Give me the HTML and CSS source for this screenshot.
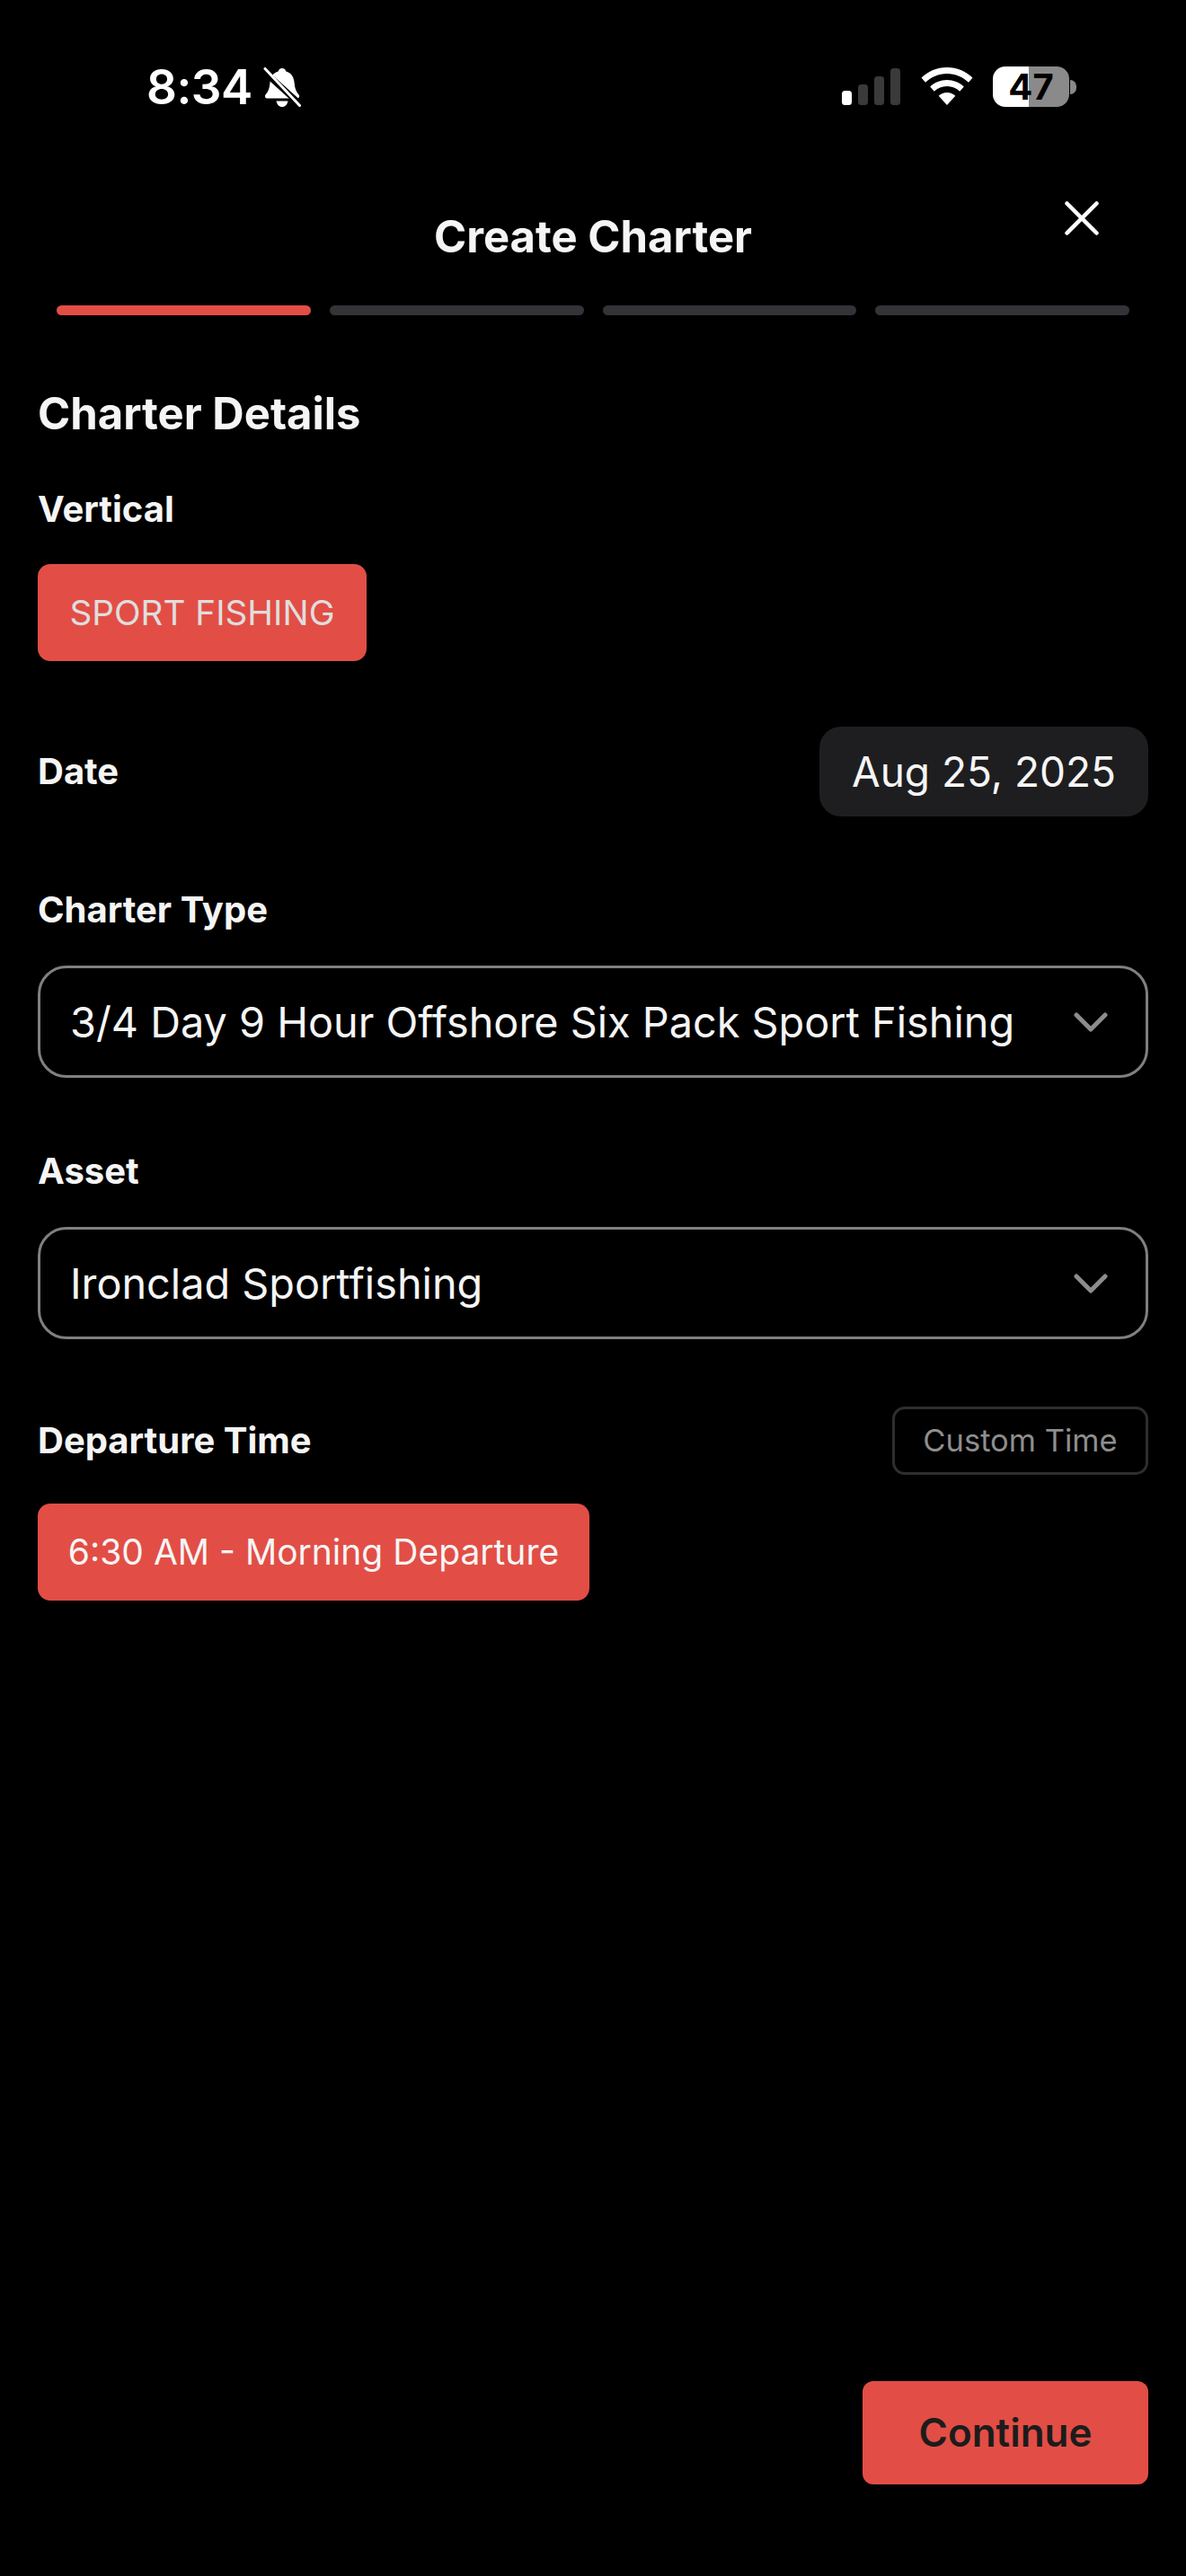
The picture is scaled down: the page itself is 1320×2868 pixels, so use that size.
FILE: index.html
```html
<!DOCTYPE html>
<html lang="en">
<head>
<meta charset="utf-8">
<title>Create Charter</title>
<link rel="stylesheet" href="styles.css">
</head>
<body>
<div class="screen">
  <header class="status">
    <div class="status-left">
      <span class="time">8:34</span>
      <svg class="bell" viewBox="0 0 42 45" aria-hidden="true">
        <path fill="#fff" d="M21 1c2.500 0 4 1.600 4.300 3.500 6 1.600 8.700 6.300 9.300 12.500.5 6 1.800 10 5 13.500 1.200 1.500.5 4-2 4H4.500c-2.500 0-3.200-2.500-2-4 3.200-3.500 4.500-7.500 5-13.500.6-6.200 3.300-10.900 9.200-12.500C17 2.600 18.500 1 21 1z"/>
        <path fill="#fff" d="M14.500 37.500h13c-.6 3.800-3.200 6.500-6.500 6.500s-5.900-2.700-6.500-6.500z"/>
        <path stroke="#000" stroke-width="7" d="M0 4l42 38"/>
        <path stroke="#fff" stroke-width="3" stroke-linecap="round" d="M2 1.500l38.500 41"/>
      </svg>
    </div>
    <div class="status-right">
      <svg class="signal" viewBox="0 0 65 41" aria-hidden="true">
        <rect x="0" y="25" width="11" height="16" rx="3.500" fill="#fff"/>
        <rect x="18" y="18" width="11" height="23" rx="3.500" fill="#3a3a3a"/>
        <rect x="36" y="9" width="11" height="32" rx="3.500" fill="#3a3a3a"/>
        <rect x="54" y="0" width="11" height="41" rx="3.500" fill="#3a3a3a"/>
      </svg>
      <svg class="wifi" viewBox="0 0 58 42" aria-hidden="true">
        <path fill="#fff" d="M29 0c11 0 21 4.300 28.500 11.500L53 16.800C46.800 10.800 38.300 7 29 7S11.200 10.800 5 16.800L.5 11.500C8 4.300 18 0 29 0z"/>
        <path fill="#fff" d="M29 14c7.200 0 13.800 2.800 18.800 7.500l-4.600 5.200C39.500 23.200 34.500 21 29 21s-10.500 2.200-14.200 5.700l-4.600-5.200C15.200 16.800 21.800 14 29 14z"/>
        <path fill="#fff" d="M29 28c3.600 0 6.900 1.400 9.300 3.700L29 42l-9.300-10.300C22.100 29.400 25.400 28 29 28z"/>
      </svg>
      <div class="battery">
        <div class="battery-body"><span class="battery-level">47</span></div>
        <span class="battery-nub"></span>
      </div>
    </div>
  </header>

  <div class="title-row">
    <h1 class="title">Create Charter</h1>
    <svg class="close" viewBox="0 0 38 38" aria-hidden="true">
      <path d="M2.500 2.500l33 33M35.500 2.500l-33 33" stroke="#fff" stroke-width="4.500" stroke-linecap="round"/>
    </svg>
  </div>

  <div class="progress">
    <span class="step step-on"></span>
    <span class="step"></span>
    <span class="step"></span>
    <span class="step"></span>
  </div>

  <main class="form">
    <h2 class="heading">Charter Details</h2>

    <section class="field-vertical">
      <div class="label">Vertical</div>
      <div class="chip chip-vertical">SPORT FISHING</div>
    </section>

    <section class="date-row">
      <div class="label">Date</div>
      <div class="date">Aug 25, 2025</div>
    </section>

    <section class="field-type">
      <div class="label">Charter Type</div>
      <div class="select">
        <span>3/4 Day 9 Hour Offshore Six Pack Sport Fishing</span>
        <svg class="chevron" viewBox="0 0 38 22" aria-hidden="true"><path d="M3 3l16 16L35 3" fill="none" stroke="#8c8c8c" stroke-width="5" stroke-linecap="round" stroke-linejoin="round"/></svg>
      </div>
    </section>

    <section class="field-asset">
      <div class="label">Asset</div>
      <div class="select">
        <span>Ironclad Sportfishing</span>
        <svg class="chevron" viewBox="0 0 38 22" aria-hidden="true"><path d="M3 3l16 16L35 3" fill="none" stroke="#8c8c8c" stroke-width="5" stroke-linecap="round" stroke-linejoin="round"/></svg>
      </div>
    </section>

    <section class="departure">
      <div class="departure-head">
        <div class="label">Departure Time</div>
        <div class="custom">Custom Time</div>
      </div>
      <div class="chip chip-time">6:30 AM - Morning Departure</div>
    </section>
  </main>

  <footer class="footer">
    <div class="continue">Continue</div>
  </footer>
</div>
</body>
</html>
```

FILE: styles.css
```css
* { box-sizing: border-box; }
html, body { margin: 0; padding: 0; background: #000; }
body { font-family: Inter, "Liberation Sans", sans-serif; color: #f5f5f5; }
.screen { width: 1320px; height: 2868px; display: flex; flex-direction: column; background: #000; }

.status { height: 200px; padding: 74px 122px 0 163px; display: flex; justify-content: space-between; align-items: flex-start; }
.status-left { display: flex; align-items: flex-start; gap: 12px; }
.time { font-size: 53px; line-height: 46px; font-weight: 600; color: #fff; letter-spacing: -0.5px; }
.bell { width: 42px; height: 45px; display: block; margin-top: 1px; }
.status-right { display: flex; align-items: flex-start; }
.signal { width: 65px; height: 41px; margin-top: 2px; display: block; }
.wifi { width: 58px; height: 42px; margin-left: 23px; margin-top: 1px; display: block; }
.battery { margin-left: 22px; display: flex; align-items: center; }
.battery-body { width: 85px; height: 45px; border-radius: 14px; background: linear-gradient(to right, #fff 47%, #8a8a8a 47%); display: flex; align-items: center; justify-content: center; }
.battery-level { font-size: 40px; line-height: 45px; font-weight: 700; color: #000; }
.battery-nub { width: 7px; height: 16px; margin-left: 1px; background: #8a8a8a; border-radius: 0 8px 8px 0; }

.title-row { height: 126px; position: relative; display: flex; justify-content: center; align-items: center; padding-top: 2px; }
.title { margin: 0; font-size: 49px; line-height: 60px; font-weight: 700; color: #f5f5f5; }
.close { position: absolute; left: 1185px; top: 24px; width: 38px; height: 38px; display: block; }

.progress { margin: 14px 63px 0; display: flex; gap: 21px; }
.step { flex: 1; height: 11px; border-radius: 6px; background: #333338; }
.step-on { background: #e24e45; }

.form { padding: 0 42px; flex: 1; }
.heading { margin: 0; padding-top: 81px; font-size: 49px; line-height: 58px; font-weight: 700; color: #f5f5f5; }
.label { font-size: 40px; line-height: 50px; font-weight: 700; color: #f5f5f5; }
.field-vertical { margin-top: 52px; }
.chip { display: block; background: #e24e45; border-radius: 14px; height: 108px; line-height: 108px; text-align: center; }
.chip-vertical { margin-top: 36px; width: 366px; font-size: 38.7px; color: #dedede; }
.date-row { margin-top: 73px; height: 100px; display: flex; justify-content: space-between; align-items: center; }
.date { width: 366px; height: 100px; line-height: 100px; text-align: center; background: #1e1e20; border-radius: 24px; font-size: 46px; color: #f5f5f5; }
.field-type { margin-top: 79px; }
.field-asset { margin-top: 79px; }
.select { margin-top: 37px; height: 125px; border: 3px solid #808080; border-radius: 32px; padding: 0 42px 0 33px; display: flex; justify-content: space-between; align-items: center; font-size: 46.8px; color: #f5f5f5; }
.chevron { width: 38px; height: 22px; display: block; }
.departure { margin-top: 75px; }
.departure-head { height: 76px; display: flex; justify-content: space-between; align-items: center; }
.custom { width: 285px; height: 76px; line-height: 70px; text-align: center; border: 3px solid #2e2e30; border-radius: 14px; font-size: 34.500px; color: #8e8e8e; }
.chip-time { margin-top: 32px; width: 614px; font-size: 39px; color: #f5f5f5; }

.footer { padding: 0 42px 102px 0; display: flex; justify-content: flex-end; }
.continue { width: 318px; height: 115px; line-height: 115px; text-align: center; background: #e24e45; border-radius: 12px; font-size: 44px; font-weight: 600; color: #1c1c1c; }
```
